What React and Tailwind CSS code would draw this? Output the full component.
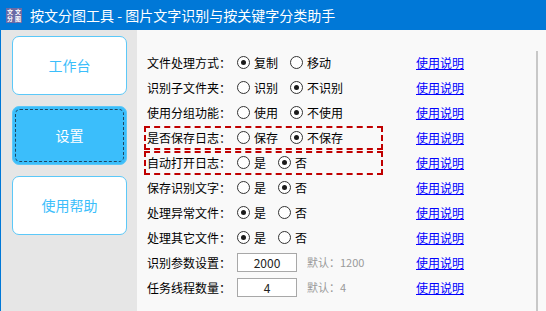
import React from "react";

const rows = [
  { label: "文件处理方式：", opts: [["复制", true], ["移动", false]] },
  { label: "识别子文件夹：", opts: [["识别", false], ["不识别", true]] },
  { label: "使用分组功能：", opts: [["使用", false], ["不使用", true]] },
  { label: "是否保存日志：", opts: [["保存", false], ["不保存", true]], box: true },
  { label: "自动打开日志：", opts: [["是", false], ["否", true]], box: true },
  { label: "保存识别文字：", opts: [["是", false], ["否", true]] },
  { label: "处理异常文件：", opts: [["是", true], ["否", false]] },
  { label: "处理其它文件：", opts: [["是", true], ["否", false]] },
  { label: "识别参数设置：", input: "2000", def: "1200" },
  { label: "任务线程数量：", input: "4", def: "4" },
];

const Radio = ({ checked }) => (
  <span className="w-[13px] h-[13px] rounded-full border border-[#333333] bg-white flex items-center justify-center shrink-0">
    {checked && <span className="w-[5px] h-[5px] rounded-full bg-[#1a1a1a]" />}
  </span>
);

const RowBody = ({ row }) => (
  <>
    <div className="w-[90px] shrink-0">{row.label}</div>
    {row.opts ? (
      <div className="flex items-center gap-[12px]">
        {row.opts.map(([text, checked]) => (
          <div key={text} className="flex items-center gap-[4px]">
            <Radio checked={checked} />
            <span>{text}</span>
          </div>
        ))}
      </div>
    ) : (
      <div className="flex items-center">
        <div className="w-[60px] h-[19px] border border-[#a8a8a8] bg-white flex items-center justify-center text-[#222]">
          {row.input}
        </div>
        <span className="ml-[10px] text-[11px] text-[#9a9a9a]">默认：{row.def}</span>
      </div>
    )}
  </>
);

const SideButton = ({ label, active }) => (
  <div
    className={
      "w-[115px] h-[59px] rounded-[7px] border border-[#5cc8f8] text-[14px] " +
      (active ? "bg-[#3bbefb] text-white p-[2px]" : "bg-white text-[#3bbefb]")
    }
  >
    <div
      className={
        "w-full h-full flex items-center justify-center rounded-[5px] " +
        (active ? "border border-dashed border-[#1f4660]" : "")
      }
    >
      {label}
    </div>
  </div>
);

export default function App() {
  return (
    <div
      className="w-[546px] h-[311px] flex flex-col overflow-hidden bg-[#f9f9f9]"
      style={{ fontFamily: '"Noto Sans CJK SC", "Noto Sans", sans-serif' }}
    >
      {/* title bar */}
      <div className="h-[30px] bg-[#0078d7] flex items-center pl-[6px] shrink-0">
        <div className="w-[16px] h-[15px] bg-[#6a6aa6] grid grid-cols-2 text-white text-[6px] leading-[7px] text-center font-bold">
          <span>文</span>
          <span>文</span>
          <span>分</span>
          <span>图</span>
        </div>
        <span className="ml-[8px] text-white text-[14px]">按文分图工具 - 图片文字识别与按关键字分类助手</span>
      </div>

      <div className="flex flex-1">
        {/* sidebar */}
        <div className="w-[137px] bg-[#e6e6e6] border-l border-[#0078d7] flex flex-col gap-[11px] pt-[6px] pl-[11px]">
          <SideButton label="工作台" />
          <SideButton label="设置" active />
          <SideButton label="使用帮助" />
        </div>

        {/* settings */}
        <div className="w-[399px] flex flex-col pt-[20px] pl-[10px] text-[12px] text-black">
          {rows.map((row) => (
            <div key={row.label} className="h-[25px] flex items-center">
              <div className="w-[269px] flex items-center">
                {row.box ? (
                  <div className="w-[239px] h-[24px] -ml-[3px] pl-[1px] border-2 border-dashed border-[#c00000] flex items-center">
                    <RowBody row={row} />
                  </div>
                ) : (
                  <RowBody row={row} />
                )}
              </div>
              <span className="text-[#0000ff] underline">使用说明</span>
            </div>
          ))}
        </div>

        <div className="mt-[21px] border-l-2 border-[#c8c8c8] flex-1" />
      </div>
    </div>
  );
}
